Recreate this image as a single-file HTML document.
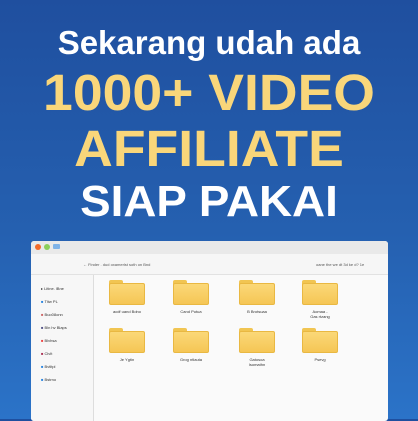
<!DOCTYPE html><html><head><style>
body{margin:0;width:418px;height:419px;overflow:hidden;background:linear-gradient(180deg,#1f4f9f 0%,#2560b0 55%,#2b73c8 100%);font-family:"Liberation Sans",sans-serif;position:relative}
.t{position:absolute;left:0;width:418px;text-align:center;font-weight:bold;white-space:nowrap}
.w{position:absolute;left:31px;top:241px;width:357px;height:180px;background:#fafafa;border-radius:3px;overflow:hidden}
.tb{height:13px;background:#e9e9e9;position:relative}
.d{position:absolute;top:3px;width:6px;height:6px;border-radius:50%}
.tool{height:20px;border-bottom:1px solid #e2e2e2;background:#f6f6f6;position:relative;font-size:4px;color:#555}
.side{position:absolute;left:0;top:34px;width:62px;bottom:0;border-right:1px solid #ddd;background:#f7f7f7;font-size:4px;color:#333}
.side div{position:absolute;left:10px}
.f{position:absolute;width:36px;height:25px}
.f .tab{position:absolute;left:0;top:0;width:14px;height:6px;background:#f1c552;border-radius:2px 2px 0 0}
.f .body{position:absolute;left:0;top:3px;width:36px;height:22px;background:linear-gradient(#fbd878,#f5c655);border-radius:2px;border:1px solid #e9b842;box-sizing:border-box}
.l{position:absolute;font-size:4px;color:#333;width:50px;text-align:center}
</style></head><body>
<div class="t" style="top:24px;font-size:33px;color:#fff">Sekarang udah ada</div>
<div class="t" style="top:63px;font-size:51px;color:#f9d67a;transform:scaleX(1.05)">1000+ VIDEO</div>
<div class="t" style="top:119px;font-size:51px;color:#f9d67a;transform:scaleX(1.05)">AFFILIATE</div>
<div class="t" style="top:177px;font-size:44px;color:#fff;transform:scaleX(1.04)">SIAP PAKAI</div>
<div class="w">
<div class="tb"><div class="d" style="left:4px;background:#f26b2a"></div><div class="d" style="left:13px;background:#8bd05c"></div><div class="d" style="left:22px;width:7px;height:5px;border-radius:1px;background:#7fb3e8"></div></div>
<div class="tool"><span style="position:absolute;left:52px;top:8px">← Finder . dud oxamerlst soth on Bnd</span><span style="position:absolute;left:285px;top:8px">oane the we dt 3d ke d? 1e</span></div>
<div class="side">
<div style="top:11px">▸ Litine. lBne</div>
<div style="top:24px"><span style="color:#2b86e0">■</span> Tltw PL</div>
<div style="top:37px"><span style="color:#c66">■</span> Buo08onn</div>
<div style="top:50px"><span style="color:#558">■</span> Bln hv Blaps</div>
<div style="top:63px"><span style="color:#e44">■</span> Blvhsa</div>
<div style="top:76px"><span style="color:#a35">■</span> Clvlt</div>
<div style="top:89px"><span style="color:#2b86e0">■</span> Bvtltpl</div>
<div style="top:102px"><span style="color:#2b86e0">■</span> Bstrno</div>
</div>
</div>
<div class="f" style="left:109px;top:280px"><div class="tab"></div><div class="body"></div></div>
<div class="f" style="left:173px;top:280px"><div class="tab"></div><div class="body"></div></div>
<div class="f" style="left:239px;top:280px"><div class="tab"></div><div class="body"></div></div>
<div class="f" style="left:302px;top:280px"><div class="tab"></div><div class="body"></div></div>
<div class="f" style="left:109px;top:328px"><div class="tab"></div><div class="body"></div></div>
<div class="f" style="left:173px;top:328px"><div class="tab"></div><div class="body"></div></div>
<div class="f" style="left:239px;top:328px"><div class="tab"></div><div class="body"></div></div>
<div class="f" style="left:302px;top:328px"><div class="tab"></div><div class="body"></div></div>
<div class="l" style="left:102px;top:309px">acdf uand Bdno</div>
<div class="l" style="left:166px;top:309px">Cand Putua</div>
<div class="l" style="left:232px;top:309px">B Brotsuaa</div>
<div class="l" style="left:295px;top:309px">Aomaa -<br>Gas rtzang</div>
<div class="l" style="left:102px;top:357px">Je Ygtin</div>
<div class="l" style="left:166px;top:357px">Grog ntlauta</div>
<div class="l" style="left:232px;top:357px">Gatosoa<br>Isomathn</div>
<div class="l" style="left:295px;top:357px">Psevg</div>
</body></html>
